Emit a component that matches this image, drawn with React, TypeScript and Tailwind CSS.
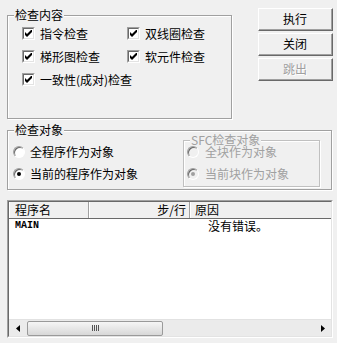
import React from 'react'

function Group({
  title,
  className,
  disabled,
  children,
}: {
  title: string
  className: string
  disabled?: boolean
  children?: React.ReactNode
}) {
  return (
    <div
      className={`relative border ${disabled ? 'border-[#c0c0c0]' : 'border-[#a0a0a0]'} shadow-[inset_1px_1px_0_#fff,1px_1px_0_#fff] ${className}`}
    >
      <span
        className={`absolute -top-[7px] left-[6px] bg-[#f0f0f0] px-[1px] leading-[12px] whitespace-nowrap ${disabled ? 'text-[#a0a0a0]' : 'text-black'}`}
      >
        {title}
      </span>
      {children}
    </div>
  )
}

function Check({ label }: { label: string }) {
  return (
    <div className="flex items-center h-[23px] whitespace-nowrap">
      <span className="w-[13px] h-[13px] border border-t-[#a0a0a0] border-l-[#a0a0a0] border-b-white border-r-white">
        <span className="flex items-center justify-center w-full h-full bg-white border border-t-[#696969] border-l-[#696969] border-b-[#e3e3e3] border-r-[#e3e3e3]">
          <svg width="7" height="7" viewBox="0 0 7 7">
            <path d="M0 2 L2 4 L7 -1 L7 2 L2 7 L0 5 Z" fill="#000" />
          </svg>
        </span>
      </span>
      <span className="ml-[5px]">{label}</span>
    </div>
  )
}

function RadioRow({
  label,
  checked,
  disabled,
  gap,
}: {
  label: string
  checked?: boolean
  disabled?: boolean
  gap: string
}) {
  return (
    <div className="flex items-center h-[22px] whitespace-nowrap">
      <span
        className={`w-[12px] h-[12px] rounded-full border border-t-[#a0a0a0] border-l-[#a0a0a0] border-b-white border-r-white shadow-[inset_1px_1px_0_#696969] flex items-center justify-center ${disabled ? 'bg-[#f0f0f0]' : 'bg-white'}`}
      >
        {checked && (
          <span
            className={`w-[4px] h-[4px] rounded-full ${disabled ? 'bg-[#a0a0a0]' : 'bg-black'}`}
          />
        )}
      </span>
      <span className={`${gap} ${disabled ? 'text-[#a0a0a0]' : 'text-black'}`}>{label}</span>
    </div>
  )
}

function Button({ children, disabled }: { children: React.ReactNode; disabled?: boolean }) {
  return (
    <div className="w-[75px] h-[23px] border border-t-white border-l-white border-r-[#696969] border-b-[#696969]">
      <div
        className={`w-full h-full flex items-center justify-center bg-[#f0f0f0] border-r border-b border-[#a0a0a0] ${disabled ? 'text-[#a0a0a0] [text-shadow:1px_1px_0_#fff]' : 'text-black'}`}
      >
        {children}
      </div>
    </div>
  )
}

function HeaderCell({
  children,
  className,
}: {
  children?: React.ReactNode
  className: string
}) {
  return (
    <div
      className={`h-full flex items-center border-l border-l-white border-r border-r-[#a0a0a0] whitespace-nowrap ${className}`}
    >
      {children}
    </div>
  )
}

function ListBox() {
  return (
    <div className="mt-[10px] w-[326px] h-[138px] border border-t-[#a0a0a0] border-l-[#a0a0a0] border-b-white border-r-white">
      <div className="h-full flex flex-col bg-white border border-t-[#696969] border-l-[#696969] border-b-[#e3e3e3] border-r-[#e3e3e3]">
        <div className="flex h-[17px] shrink-0 bg-[#f0f0f0] border-b border-[#696969]">
          <HeaderCell className="w-[80px] pl-[5px]">程序名</HeaderCell>
          <HeaderCell className="w-[101px] justify-end pr-[3px]">步/行</HeaderCell>
          <HeaderCell className="flex-1 pl-[4px] border-r-0">原因</HeaderCell>
        </div>
        <div className="flex h-[14px] items-center">
          <span className="w-[80px] pl-[6px] font-['Liberation_Mono',monospace] font-bold text-[10px]">
            MAIN
          </span>
          <span className="w-[101px]" />
          <span className="pl-[18px]">没有错误。</span>
        </div>
        <div className="flex-1" />
        <div className="flex h-[17px] shrink-0 bg-[#ebebeb] border-t border-[#e2e2e2]">
          <div className="w-[17px] flex items-center justify-center">
            <svg width="4" height="7" viewBox="0 0 4 7">
              <path d="M4 0 L0 3.5 L4 7 Z" fill="#000" />
            </svg>
          </div>
          <div className="flex-1 flex items-center">
            <div className="ml-[1px] w-[136px] h-[15px] rounded-[2px] border border-[#9a9a9a] bg-gradient-to-b from-[#f6f6f6] to-[#d8d8d8] flex items-center justify-center gap-[1px]">
              <span className="w-[1px] h-[6px] bg-[#555]" />
              <span className="w-[1px] h-[6px] bg-[#555]" />
              <span className="w-[1px] h-[6px] bg-[#555]" />
              <span className="w-[1px] h-[6px] bg-[#555]" />
            </div>
          </div>
          <div className="w-[17px] flex items-center justify-center">
            <svg width="4" height="7" viewBox="0 0 4 7">
              <path d="M0 0 L4 3.5 L0 7 Z" fill="#000" />
            </svg>
          </div>
        </div>
      </div>
    </div>
  )
}

export default function App() {
  return (
    <div className="w-[337px] h-[343px] overflow-hidden bg-[#f0f0f0] pl-[7px] pt-[8px] text-[12px] leading-[12px] text-black font-['Noto_Sans_CJK_SC',sans-serif]">
      <div className="flex">
        <Group title="检查内容" className="mt-[7px] w-[225px] h-[104px]">
          <div className="grid grid-cols-[105px_auto] pt-[6px] pl-[14px]">
            <Check label="指令检查" />
            <Check label="双线圈检查" />
            <Check label="梯形图检查" />
            <Check label="软元件检查" />
            <div className="col-span-2">
              <Check label="一致性(成对)检查" />
            </div>
          </div>
        </Group>
        <div className="ml-[26px] flex flex-col gap-[2px]">
          <Button>执行</Button>
          <Button>关闭</Button>
          <Button disabled>跳出</Button>
        </div>
      </div>

      <Group title="检查对象" className="mt-[11px] w-[325px] h-[60px]">
        <div className="flex items-start">
          <div className="mt-[10px] pl-[5px]">
            <RadioRow label="全程序作为对象" gap="ml-[5px]" />
            <RadioRow label="当前的程序作为对象" checked gap="ml-[5px]" />
          </div>
          <Group
            title="SFC检查对象"
            disabled
            className="ml-auto mr-[11px] mt-[9px] w-[137px] h-[47px]"
          >
            <div className="pl-[3px]">
              <RadioRow label="全块作为对象" disabled gap="ml-[6px]" />
              <RadioRow label="当前块作为对象" checked disabled gap="ml-[6px]" />
            </div>
          </Group>
        </div>
      </Group>

      <ListBox />
    </div>
  )
}
